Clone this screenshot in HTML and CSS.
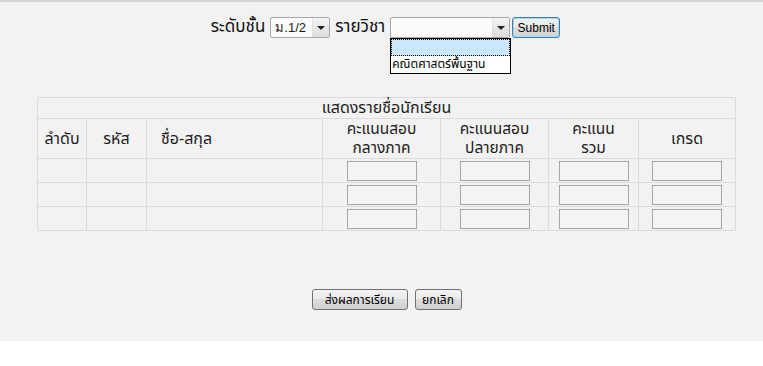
FILE: index.html
```html
<!DOCTYPE html>
<html lang="th">
<head>
<meta charset="utf-8">
<title>ส่งผลการเรียน</title>
<link rel="stylesheet" href="styles.css">
</head>
<body>
<div class="page">
  <form class="filter">
    <span class="label">ระดับชั้น</span>
    <span class="select sel-class"><span class="sel-text">ม.1/2</span><span class="arrow"></span></span>
    <span class="label">รายวิชา</span>
    <span class="select sel-subject"><span class="sel-text"></span><span class="arrow"></span>
      <span class="dropdown">
        <span class="opt opt-active"></span>
        <span class="opt">คณิตศาสตร์พื้นฐาน</span>
      </span>
    </span>
    <span class="btn btn-submit">Submit</span>
  </form>

  <table class="grid">
    <colgroup>
      <col class="c1"><col class="c2"><col class="c3"><col class="c4"><col class="c5"><col class="c6"><col class="c7">
    </colgroup>
    <tr class="title-row"><th colspan="7">แสดงรายชื่อนักเรียน</th></tr>
    <tr class="head-row">
      <th>ลำดับ</th>
      <th>รหัส</th>
      <th class="name-head">ชื่อ-สกุล</th>
      <th><span class="ln">คะแนนสอบ</span><span class="ln">กลางภาค</span></th>
      <th><span class="ln">คะแนนสอบ</span><span class="ln">ปลายภาค</span></th>
      <th><span class="ln">คะแนน</span><span class="ln">รวม</span></th>
      <th>เกรด</th>
    </tr>
    <tr class="data-row">
      <td></td><td></td><td></td>
      <td><span class="box"></span></td><td><span class="box"></span></td><td><span class="box"></span></td><td><span class="box"></span></td>
    </tr>
    <tr class="data-row">
      <td></td><td></td><td></td>
      <td><span class="box"></span></td><td><span class="box"></span></td><td><span class="box"></span></td><td><span class="box"></span></td>
    </tr>
    <tr class="data-row">
      <td></td><td></td><td></td>
      <td><span class="box"></span></td><td><span class="box"></span></td><td><span class="box"></span></td><td><span class="box"></span></td>
    </tr>
  </table>

  <div class="actions">
    <span class="btn btn-send">ส่งผลการเรียน</span>
    <span class="btn btn-cancel">ยกเลิก</span>
  </div>
</div>
</body>
</html>
```
FILE: styles.css
```css
html, body {
  margin: 0;
  padding: 0;
  background: #ffffff;
}
body {
  font-family: Tahoma, "Noto Sans Thai", Loma, Garuda, "Noto Sans", sans-serif;
  color: #1a1a1a;
}
.page {
  background: #f2f2f2;
  border-top: 2px solid #d6d6d6;
  height: 341px;
  box-sizing: border-box;
  padding-top: 15px;
}
.filter {
  display: flex;
  justify-content: center;
  align-items: center;
  gap: 5px;
  height: 21px;
  margin: 0;
  padding-left: 8px;
}
.label {
  font-size: 17px;
  line-height: 21px;
  color: #111;
}
.select {
  position: relative;
  display: inline-flex;
  align-items: center;
  height: 21px;
  box-sizing: border-box;
  border: 1px solid #a7a7a7;
  background: #fbfbfb;
  border-radius: 2px;
}
.sel-class { width: 60px; }
.sel-subject { width: 120px; }
.sel-text {
  flex: 1;
  font-size: 13px;
  padding-left: 4px;
  font-family: "Liberation Sans", Tahoma, sans-serif;
}
.arrow {
  width: 16px;
  height: 19px;
  background: linear-gradient(#f4f4f4, #dcdcdc);
  position: relative;
  border-left: 1px solid #e2e2e2;
}
.arrow::after {
  content: "";
  position: absolute;
  left: 4px;
  top: 8px;
  border-left: 4px solid transparent;
  border-right: 4px solid transparent;
  border-top: 4px solid #222;
}
.dropdown {
  position: absolute;
  left: -1px;
  top: 20px;
  width: 121px;
  box-sizing: border-box;
  border: 1px solid #000;
  background: #fff;
  display: flex;
  flex-direction: column;
  z-index: 5;
}
.opt {
  height: 17px;
  font-size: 12px;
  line-height: 17px;
  padding-left: 1px;
  white-space: nowrap;
  color: #000;
}
.opt-active {
  background: #cce8ff;
  outline: 1px dotted #000;
  outline-offset: -1px;
}
.btn {
  display: inline-flex;
  align-items: center;
  justify-content: center;
  box-sizing: border-box;
  border: 1px solid #707070;
  border-radius: 3px;
  background: linear-gradient(#f2f2f2 0%, #ebebeb 45%, #dddddd 50%, #cfcfcf 100%);
  color: #000;
  font-size: 12px;
  height: 21px;
}
.btn-submit {
  width: 48px;
  font-family: "Liberation Sans", Arial, sans-serif;
  border-color: #3c7fb1;
  background: linear-gradient(#f2f2f2 0%, #ebebeb 45%, #dddddd 50%, #d3d3d3 100%);
  margin-left: -3px;
  box-shadow: inset 0 0 0 1px #a9d6f3;
}
.grid {
  margin: 59px 0 0 37px;
  width: 698px;
  border-collapse: collapse;
  border: 1px solid #dcdcdc;
  table-layout: fixed;
}
.grid th, .grid td {
  border: 1px solid #dcdcdc;
  padding: 0;
  font-weight: normal;
  font-size: 16px;
  color: #1e1e1e;
  text-align: center;
  line-height: 20px;
}
.grid .ln {
  display: block;
  font-size: 15.5px;
  line-height: 19px;
}
.title-row th { height: 19px; }
.head-row th { height: 39px; }
.grid .name-head { text-align: left; padding-left: 14px; }
.c1 { width: 49px; }
.c2 { width: 60px; }
.c3 { width: 176px; }
.c4 { width: 118px; }
.c5 { width: 108px; }
.c6 { width: 90px; }
.c7 { width: 97px; }
.data-row td { height: 23px; }
.box {
  display: block;
  margin: 0 auto;
  width: 70px;
  height: 20px;
  box-sizing: border-box;
  border: 1px solid #a5a5a5;
  background: #f4f4f4;
}
.actions {
  display: flex;
  justify-content: center;
  gap: 7px;
  margin-top: 58px;
  padding-left: 10px;
}
.btn-send { width: 96px; }
.btn-cancel { width: 47px; }
```
